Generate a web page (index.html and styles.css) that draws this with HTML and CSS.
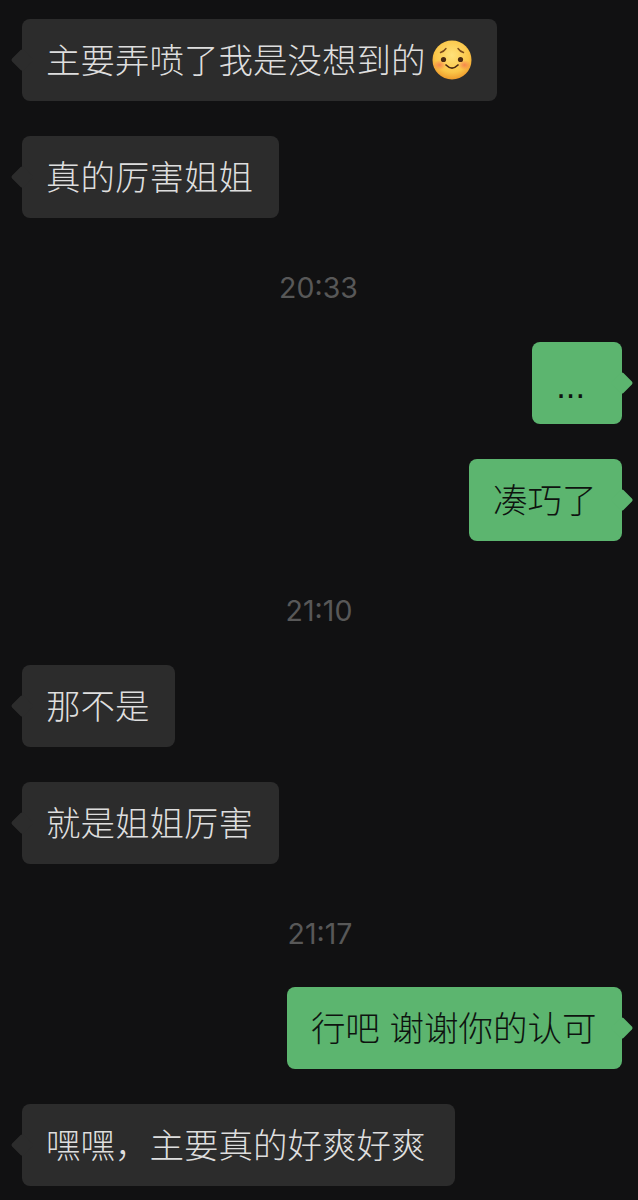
FILE: index.html
```html
<!DOCTYPE html>
<html lang="zh-CN">
<head>
<meta charset="utf-8">
<title>Chat</title>
<link rel="stylesheet" href="styles.css">
</head>
<body>
<main class="chat">
  <div class="msg in"><div class="bubble">主要弄喷了我是没想到的<svg class="emoji" viewBox="0 0 40 40" aria-hidden="true">
    <defs>
      <radialGradient id="face" cx="50%" cy="38%" r="62%"><stop offset="0" stop-color="#ffe27a"/><stop offset=".7" stop-color="#fbc648"/><stop offset="1" stop-color="#ee9b2c"/></radialGradient>
      <radialGradient id="blush"><stop offset="0" stop-color="#f47a4e" stop-opacity=".85"/><stop offset="1" stop-color="#f47a4e" stop-opacity="0"/></radialGradient>
    </defs>
    <circle cx="20" cy="20" r="19.5" fill="url(#face)"/>
    <ellipse cx="7.5" cy="25" rx="6.5" ry="5" fill="url(#blush)"/>
    <ellipse cx="32.5" cy="25" rx="6.5" ry="5" fill="url(#blush)"/>
    <circle cx="11.5" cy="19.5" r="2.6" fill="#4a2a12"/>
    <circle cx="28.5" cy="19.5" r="2.6" fill="#4a2a12"/>
    <path d="M8.5 12.5 Q12 11.5 14 8.5M31.5 12.5 Q28 11.5 26 8.5" fill="none" stroke="#7a4a1c" stroke-width="1.4" stroke-linecap="round"/>
    <path d="M14 25 Q20 31 26 25" fill="none" stroke="#4a2a12" stroke-width="1.7" stroke-linecap="round"/>
  </svg></div></div>
  <div class="msg in"><div class="bubble">真的厉害姐姐</div></div>
  <div class="time">20:33</div>
  <div class="msg out"><div class="bubble dots">...</div></div>
  <div class="msg out"><div class="bubble">凑巧了</div></div>
  <div class="time mid">21:10</div>
  <div class="msg in"><div class="bubble">那不是</div></div>
  <div class="msg in"><div class="bubble">就是姐姐厉害</div></div>
  <div class="time late">21:17</div>
  <div class="msg out"><div class="bubble">行吧 谢谢你的认可</div></div>
  <div class="msg in"><div class="bubble wide">嘿嘿，主要真的好爽好爽</div></div>
</main>
</body>
</html>
```
FILE: styles.css
```css
html, body {
  margin: 0;
  background: #111112;
}
body {
  height: 1200px;
  overflow: hidden;
}
.chat {
  display: flex;
  flex-direction: column;
  gap: 35px;
  padding: 19px 16px 0 22px;
  font-family: "Noto Sans CJK SC", "Liberation Sans", sans-serif;
  font-size: 34.5px;
  font-weight: 300;
  word-spacing: 2px;
}
.msg {
  display: flex;
}
.msg.out {
  justify-content: flex-end;
}
.bubble {
  position: relative;
  display: flex;
  align-items: center;
  height: 82px;
  box-sizing: border-box;
  padding: 0 25.5px 4px 24px;
  border-radius: 8px;
  white-space: pre;
}
.bubble::before {
  content: "";
  position: absolute;
  top: 33px;
  width: 16px;
  height: 16px;
  border-radius: 2px;
  background: inherit;
  transform: rotate(45deg);
}
.in .bubble {
  background: #2c2c2c;
  color: #dedede;
}
.in .bubble::before {
  left: -8px;
}
.out .bubble {
  background: #5cb56f;
  color: #0e130f;
}
.out .bubble::before {
  right: -8px;
}
.wide {
  padding-right: 29px;
}
.dots {
  padding: 8px 37px 0 24px;
  font-family: "Liberation Sans", sans-serif;
  font-weight: 400;
}
.emoji {
  flex: none;
  width: 40px;
  height: 40px;
  margin: 4px 0 0 6px;
}
.time {
  height: 53.8px;
  box-sizing: border-box;
  padding: 15px 7px 0 0;
  line-height: 40px;
  text-align: center;
  font-family: Inter, "Liberation Sans", sans-serif;
  font-size: 28.5px;
  font-weight: 400;
  color: #585858;
}
.time.mid {
  padding-right: 6px;
}
.time.late {
  padding-right: 4px;
}
```
